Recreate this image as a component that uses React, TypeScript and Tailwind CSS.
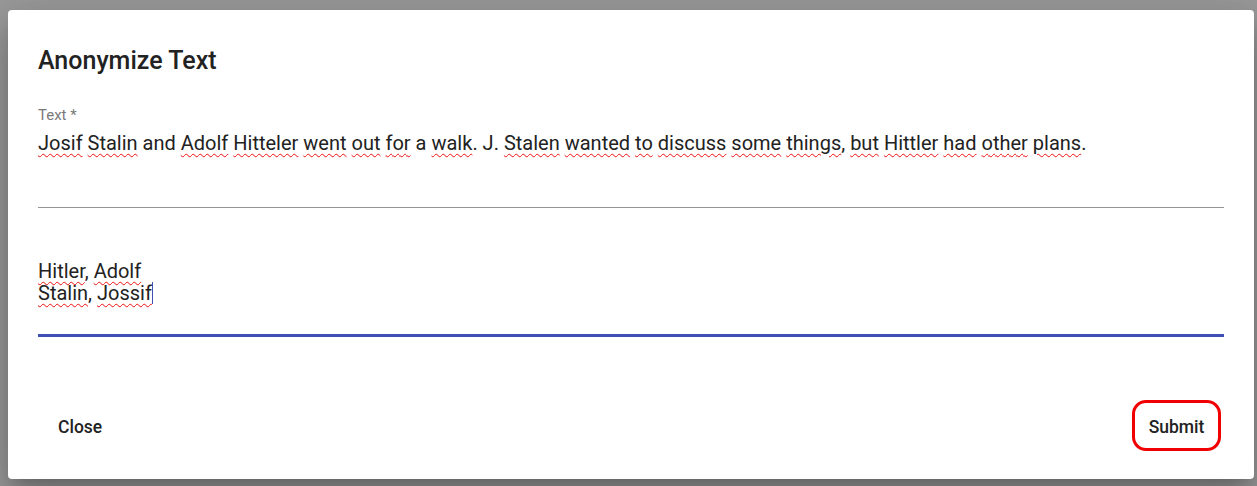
import React from "react";

const sq = "underline decoration-wavy decoration-[#f01010] decoration-1 underline-offset-[3px]";

function W({ children }: { children: React.ReactNode }) {
  return <span className={sq}>{children}</span>;
}

export default function App() {
  return (
    <div
      className="w-[1257px] h-[486px] bg-[#9a9a9a] pt-[10px] pl-[8px] overflow-hidden"
      style={{ fontFamily: "Roboto, 'Liberation Sans', sans-serif" }}
    >
      <div className="w-[1246px] h-[469px] bg-white rounded-[4px] shadow-[0_11px_15px_-7px_rgba(0,0,0,0.2),0_24px_38px_3px_rgba(0,0,0,0.14),0_9px_46px_8px_rgba(0,0,0,0.12)] flex flex-col px-[30px] pt-[35px] pb-[28px] text-[#222222]">
        <h2 className="text-[25px] leading-[32px] font-medium">Anonymize Text</h2>

        <div className="mt-[29px] text-[15px] leading-[18px] text-[#7a7a7a]">Text *</div>
        <div className="mt-[8px] h-[76px] border-b border-[#949494] text-[20px] leading-[22px]">
          <W>Josif</W> <W>Stalin</W> and <W>Adolf</W> <W>Hitteler</W> <W>went</W> <W>out</W>{" "}
          <W>for</W> a <W>walk</W>. J. <W>Stalen</W> <W>wanted</W> <W>to</W> <W>discuss</W>{" "}
          <W>some</W> <W>things</W>, <W>but</W> <W>Hittler</W> <W>had</W> <W>other</W>{" "}
          <W>plans</W>.
        </div>

        <div className="mt-[51px] h-[78px] border-b-[3px] border-[#3f51b5] text-[20px] leading-[22px] pt-px">
          <div>
            <W>Hitler</W>, <W>Adolf</W>
          </div>
          <div className="flex items-center">
            <span>
              <W>Stalin</W>, <W>Jossif</W>
            </span>
            <span className="inline-block w-px h-[22px] bg-[#3f51b5]" />
          </div>
        </div>

        <div className="mt-auto flex items-center justify-between">
          <button className="h-[51px] pt-[3px] px-[20px] text-[17.5px] font-medium text-[#222222]">Close</button>
          <button className="mr-[3px] w-[89px] h-[51px] pt-[3px] border-[3px] border-[#f00000] rounded-[14px] text-[17.5px] font-medium text-[#222222] flex items-center justify-center">
            Submit
          </button>
        </div>
      </div>
    </div>
  );
}
